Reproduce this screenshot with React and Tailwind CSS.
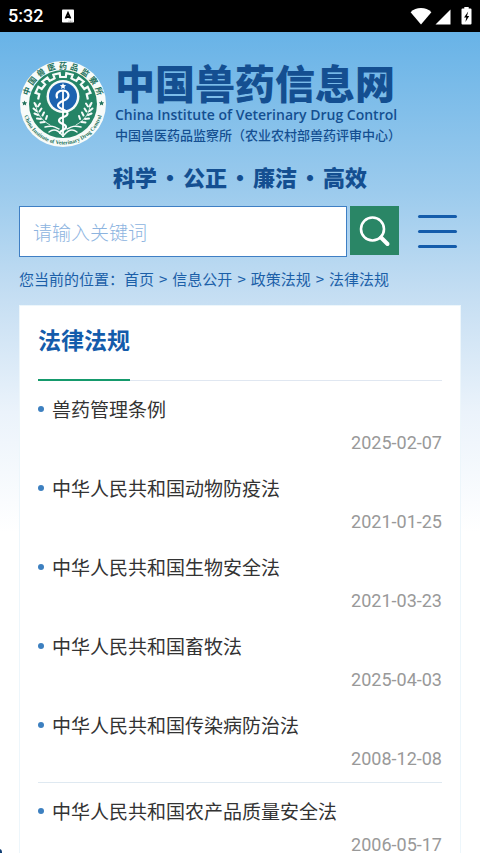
import { Fragment } from "react";

const slogans = ["科学", "公正", "廉洁", "高效"];

const crumbs = ["首页", "信息公开", "政策法规", "法律法规"];

// laws are listed in groups of five with a rule between groups
const lawGroups = [
  [
    { title: "兽药管理条例", date: "2025-02-07" },
    { title: "中华人民共和国动物防疫法", date: "2021-01-25" },
    { title: "中华人民共和国生物安全法", date: "2021-03-23" },
    { title: "中华人民共和国畜牧法", date: "2025-04-03" },
    { title: "中华人民共和国传染病防治法", date: "2008-12-08" },
  ],
  [{ title: "中华人民共和国农产品质量安全法", date: "2006-05-17" }],
];

// ===============================
// STATUS BAR
// ===============================
function StatusBar() {
  return (
    <div className="flex h-8 shrink-0 items-center justify-between bg-black px-2 text-white">
      <div className="flex items-center gap-[18px]">
        <span className="font-['Roboto',sans-serif] text-lg leading-8 font-medium">5:32</span>
        <svg className="h-3.5 w-3.5" viewBox="0 0 14 14" aria-hidden="true">
          <rect x="1" y="0.5" width="12" height="13" rx="0.8" fill="#fff" />
          <path d="M4.5 9.500 7 4 9.500 9.500M5.400 8h3.200" fill="none" stroke="#000" strokeWidth="1.8" />
          <path d="M7.5 12.2h4.5" stroke="#777" strokeWidth="0.8" strokeDasharray="1 0.5" />
        </svg>
      </div>
      <div className="flex items-center">
        <svg className="h-5 w-[22px]" viewBox="0 0 22 20" fill="#fff" aria-hidden="true">
          <path d="M11 18.5.6 6.2C3.4 3.4 7 2 11 2s7.600 1.400 10.400 4.200z" />
        </svg>
        <svg className="ml-[3px] h-5 w-4" viewBox="0 0 16 20" fill="#fff" aria-hidden="true">
          <path d="M15.500 3.500V18.500H.5z" />
        </svg>
        <svg className="ml-[10px] h-5 w-[11px]" viewBox="0 0 11 20" aria-hidden="true">
          <path d="M3.300 1h4.400v1.600h1.800q1 0 1 1V17.500q0 1-1 1h-8q-1 0-1-1V3.600q0-1 1-1h1.800z" fill="#fff" />
          <path d="M7.200 5.600 3 11.600h2.300L4.400 16 8.200 10H6z" fill="#000" />
        </svg>
      </div>
    </div>
  );
}

// ===============================
// LOGO
// ===============================

// square teeth along the upper arc of the emblem
function gearPath(cx, cy, inner, outer, teeth) {
  const slots = teeth * 2 + 1;
  const start = Math.PI * 1.03;
  const sweep = Math.PI * 0.94;
  const at = (r, t) => {
    const angle = start + sweep * t;
    return `${(cx + r * Math.cos(angle)).toFixed(1)} ${(cy + r * Math.sin(angle)).toFixed(1)}`;
  };
  const points = [];
  for (let i = 0; i < slots; i++) {
    const r = i % 2 === 0 ? inner : outer;
    points.push(at(r, i / slots), at(r, (i + 1) / slots));
  }
  return `M${points.join("L")}`;
}

function Emblem() {
  return (
    <svg className="h-[88px] w-[88px] shrink-0" viewBox="0 0 88 88" role="img" aria-label="中国兽医药品监察所">
      <defs>
        <path id="ringTop" d="M8.500 44a35.500 35.500 0 0 1 71 0" />
        <path id="ringBottom" d="M3.500 44a40.500 40.500 0 0 0 81 0" />
      </defs>
      <circle cx="44" cy="44" r="43" fill="#f7fbf9" />
      <circle cx="44" cy="44" r="34" fill="#258466" />
      <text fill="#20705a" fontSize="8" fontWeight="700" fontFamily="'Noto Sans CJK SC', sans-serif">
        {["中", "国", "兽", "医", "药", "品", "监", "察", "所"].map((char, i) => (
          <textPath key={char} href="#ringTop" startOffset={`${11 + i * 9.75}%`} textAnchor="middle">
            {char}
          </textPath>
        ))}
      </text>
      <text fill="#20705a" fontSize="5.6" fontWeight="700" fontFamily="'Liberation Serif', serif">
        <textPath href="#ringBottom" startOffset="50%" textAnchor="middle">
          China Institute of Veterinary Drug Control
        </textPath>
      </text>
      <g fill="#20705a">
        <path id="star" d="m5.500 40.500.8 1.700 1.900.2-1.400 1.300.4 1.900-1.700-1-1.700 1 .4-1.900-1.400-1.300 1.900-.2z" />
        <use href="#star" x="77" />
      </g>
      <path d={gearPath(44, 42, 25, 29, 6)} fill="none" stroke="#f7fbf9" strokeWidth="2.200" />
      <circle cx="44" cy="36.500" r="18.500" fill="#258466" />
      <circle cx="44" cy="36.500" r="16.500" fill="#f7fbf9" />
      <circle cx="44" cy="36.500" r="14" fill="#1c63b0" />
      {/* staff and snake */}
      <path d="m44 23 .9 2 2.200.2-1.600 1.500.4 2.200-1.900-1.100-1.900 1.100.4-2.200-1.600-1.500 2.200-.2z" fill="#fff" />
      <path d="M44 30v47" stroke="#fff" strokeWidth="1.800" />
      <path
        d="M38 37.500c-1.500-4 1.500-7 6-7 5 0 7 5 4 8-2 2.500-9 3-9 7s9.500 3.500 9.500 8-8.500 3-8.500 7 7 3 7 6.500-6 3-6 6"
        fill="none"
        stroke="#fff"
        strokeWidth="2.200"
        strokeLinecap="round"
      />
      {/* laurel */}
      <g id="laurel" fill="none" stroke="#f7fbf9" strokeLinecap="round">
        <path d="M17 44c0 9 5 16 14 21" strokeWidth="0.8" />
        <path
          d="m17 46-1.500-3m2 8-3-2.500m4.500 6.500-3.500-1.500m6.500 5.500-4-.5m7.500 3.500-4 .5m-2.500-16 2-3m-.5 8 2-3m1 7 1.500-3m2 6.500 1-3"
          strokeWidth="2"
        />
        <path d="M30 72c5-4 9-2 13 3M26 67c7-2 10 0 14 2" strokeWidth="1.400" />
      </g>
      <use href="#laurel" transform="matrix(-1 0 0 1 88 0)" />
    </svg>
  );
}

function Brand() {
  return (
    <header className="pt-[28px] text-[#144f91]">
      <div className="flex items-start gap-2">
        <Emblem />
        <div className="whitespace-nowrap">
          <h1 className="text-[40px] leading-[45px] font-black">中国兽药信息网</h1>
          <p className="font-['Open_Sans',sans-serif] text-sm leading-5 font-semibold">
            China Institute of Veterinary Drug Control
          </p>
          <p className="text-[13px] leading-5 font-medium">中国兽医药品监察所（农业农村部兽药评审中心）</p>
        </div>
      </div>
      <p className="mt-3 flex justify-center text-[22px] leading-8 font-black">
        {slogans.map((word, i) => (
          <Fragment key={word}>
            {i > 0 && <span className="w-[26px] text-center">·</span>}
            <span>{word}</span>
          </Fragment>
        ))}
      </p>
    </header>
  );
}

// ===============================
// SEARCH
// ===============================
function SearchBar() {
  return (
    <form className="mt-3.5 flex items-start" onSubmit={(e) => e.preventDefault()}>
      <input
        type="search"
        aria-label="请输入关键词"
        placeholder="请输入关键词"
        className="h-[51px] min-w-0 flex-1 border border-[#3f7fc4] bg-white px-[13px] text-[19px] text-[#144f91] outline-none placeholder:font-light placeholder:text-[#8db4df]"
      />
      <button type="submit" aria-label="搜索" className="ml-[3px] flex h-[49px] w-[49px] items-center justify-center bg-[#2a8666]">
        <svg className="h-8 w-8" viewBox="0 0 32 32" fill="none" stroke="#fff" aria-hidden="true">
          <circle cx="13.500" cy="14" r="11.500" strokeWidth="2.600" />
          <path d="m22 22.500 6.500 6.500" strokeWidth="4" strokeLinecap="round" />
        </svg>
      </button>
      <button type="button" aria-label="菜单" className="ml-[19px] mr-1 flex h-[51px] w-[39px] flex-col justify-center gap-3">
        <span className="h-[3px] w-full rounded-full bg-[#145cab]" />
        <span className="h-[3px] w-full rounded-full bg-[#145cab]" />
        <span className="h-[3px] w-full rounded-full bg-[#145cab]" />
      </button>
    </form>
  );
}

function Breadcrumb() {
  return (
    <nav className="mt-1.5 text-[15px] leading-8 whitespace-nowrap text-[#1b5fa8]">
      您当前的位置：
      {crumbs.map((crumb, i) => (
        <Fragment key={crumb}>
          {i > 0 && <span className="mx-[5px]">&gt;</span>}
          <a href="#">{crumb}</a>
        </Fragment>
      ))}
    </nav>
  );
}

// ===============================
// LAW LIST
// ===============================
function LawItem({ title, date }) {
  return (
    <li className="pb-[11px] last:pb-1.5">
      <a href="#" className="flex items-center text-[19px] leading-[34px] text-[#333]">
        <span className="mr-2 h-1.5 w-1.5 rounded-full bg-[#3d80c0]" />
        {title}
      </a>
      <time dateTime={date} className="block text-right font-['Roboto',sans-serif] text-lg leading-[34px] text-[#999]">
        {date}
      </time>
    </li>
  );
}

export default function App() {
  return (
    <div className="relative flex h-screen flex-col overflow-hidden bg-white font-['Noto_Sans_CJK_SC',sans-serif]">
      <StatusBar />
      <div className="flex-1 bg-[linear-gradient(180deg,#68b3e7_0px,#9ccbed_160px,#c7dff3_270px,#ebf3fb_380px,#ffffff_500px)] px-[19px]">
        <Brand />
        <SearchBar />
        <Breadcrumb />
        <main className="mt-2.5 border border-[#edf6fb] bg-white px-[18px]">
          <div className="border-b border-[#e0e7f1]">
            <h2 className="-mb-px inline-block border-b-2 border-[#159a6c] pt-3.5 pb-[21px] align-top text-[23px] leading-[38px] font-bold text-[#145cab]">
              法律法规
            </h2>
          </div>
          {lawGroups.map((group, i) => (
            <ul key={i} className={i > 0 ? "border-t border-[#dfe9f1] pt-[11px]" : "pt-[11px]"}>
              {group.map((law) => (
                <LawItem key={law.title} {...law} />
              ))}
            </ul>
          ))}
        </main>
      </div>
      <span className="absolute -bottom-1 -left-1 h-2 w-1.5 rounded-full bg-[#123f73]" />
    </div>
  );
}
